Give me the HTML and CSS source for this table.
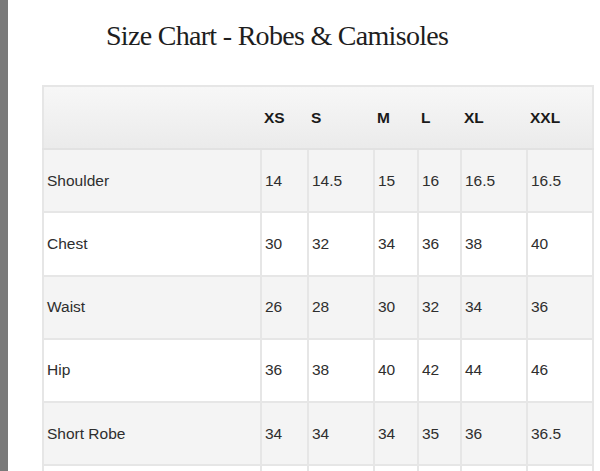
FILE: index.html
```html
<!DOCTYPE html>
<html>
<head>
<meta charset="utf-8">
<link rel="stylesheet" href="styles.css">
</head>
<body>
<div class="edge"></div>
<main class="content">
  <h1 class="title">Size Chart - Robes &amp; Camisoles</h1>
  <table class="chart">
    <colgroup>
      <col class="c-label"><col class="c-xs"><col class="c-s"><col class="c-m"><col class="c-l"><col class="c-xl"><col class="c-xxl">
    </colgroup>
    <thead>
      <tr><th></th><th>XS</th><th>S</th><th>M</th><th>L</th><th>XL</th><th>XXL</th></tr>
    </thead>
    <tbody>
      <tr><td>Shoulder</td><td>14</td><td>14.5</td><td>15</td><td>16</td><td>16.5</td><td>16.5</td></tr>
      <tr><td>Chest</td><td>30</td><td>32</td><td>34</td><td>36</td><td>38</td><td>40</td></tr>
      <tr><td>Waist</td><td>26</td><td>28</td><td>30</td><td>32</td><td>34</td><td>36</td></tr>
      <tr><td>Hip</td><td>36</td><td>38</td><td>40</td><td>42</td><td>44</td><td>46</td></tr>
      <tr><td>Short Robe</td><td>34</td><td>34</td><td>34</td><td>35</td><td>36</td><td>36.5</td></tr>
      <tr class="next"><td></td><td></td><td></td><td></td><td></td><td></td><td></td></tr>
    </tbody>
  </table>
</main>
</body>
</html>
```

FILE: styles.css
```css
html, body {
  margin: 0;
  padding: 0;
  height: 471px;
  overflow: hidden;
  background: #ffffff;
}
body {
  display: flex;
}
.edge {
  width: 8px;
  flex: none;
  background: #7a7a7a;
}
.content {
  flex: 1;
  padding-top: 19px;
}
.title {
  margin: 0 0 32px 98px;
  font-family: "Liberation Serif", "DejaVu Serif", serif;
  font-weight: normal;
  font-size: 28px;
  line-height: 34px;
  letter-spacing: -0.7px;
  color: #1e1e1e;
  white-space: nowrap;
}
.chart {
  margin-left: 34px;
  width: 550px;
  table-layout: fixed;
  border-collapse: collapse;
  border: 2px solid #e6e6e6;
  font-family: "Liberation Sans", Arial, sans-serif;
  font-size: 15.5px;
  color: #2e2e2e;
}
.c-label { width: 218px; }
.c-xs { width: 47px; }
.c-s { width: 66px; }
.c-m { width: 44px; }
.c-l { width: 43px; }
.c-xl { width: 66px; }
.c-xxl { width: 66px; }
.chart th {
  height: 61.2px;
  padding: 0 3px;
  text-align: left;
  font-weight: bold;
  color: #1a1a1a;
  background: linear-gradient(#f7f7f7, #ebebeb);
  border-bottom: 2px solid #e2e2e2;
}
.chart td {
  height: 61.2px;
  padding: 0 3px;
  text-align: left;
  vertical-align: middle;
  border: 2px solid #e6e6e6;
}
.chart tbody tr:nth-child(odd) td {
  background: #f4f4f4;
}
.chart tbody tr:nth-child(even) td {
  background: #ffffff;
}
```
